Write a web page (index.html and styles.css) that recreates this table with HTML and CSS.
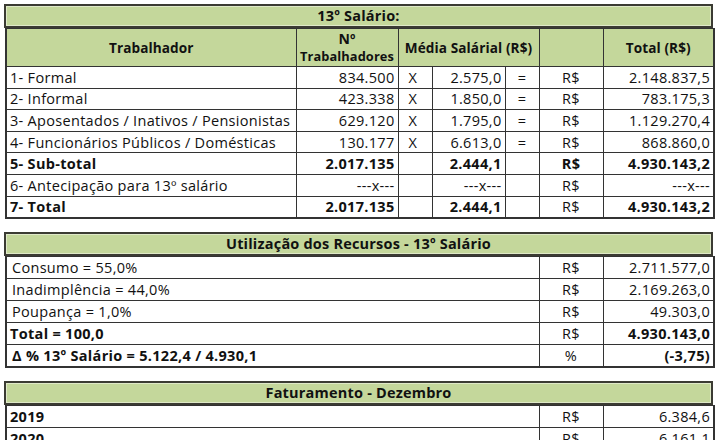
FILE: index.html
```html
<!DOCTYPE html>
<html lang="pt-BR">
<head>
<meta charset="utf-8">
<link rel="stylesheet" href="styles.css">
</head>
<body>
<div class="sheet">
  <section class="block">
    <div class="title">13º Salário:</div>
    <table class="grid t1">
      <colgroup>
        <col class="c-label"><col class="c-num"><col class="c-x"><col class="c-avg"><col class="c-eq"><col class="c-cur"><col class="c-tot">
      </colgroup>
      <tr class="head">
        <th>Trabalhador</th>
        <th><span class="big">Nº</span><br><span class="small">Trabalhadores</span></th>
        <th colspan="3">Média Salárial (R$)</th>
        <th></th>
        <th>Total (R$)</th>
      </tr>
      <tr><td class="lbl">1- Formal</td><td class="num">834.500</td><td class="x">X</td><td class="num">2.575,0</td><td class="ctr">=</td><td class="ctr">R$</td><td class="num">2.148.837,5</td></tr>
      <tr><td class="lbl">2- Informal</td><td class="num">423.338</td><td class="x">X</td><td class="num">1.850,0</td><td class="ctr">=</td><td class="ctr">R$</td><td class="num">783.175,3</td></tr>
      <tr><td class="lbl">3- Aposentados / Inativos / Pensionistas</td><td class="num">629.120</td><td class="x">X</td><td class="num">1.795,0</td><td class="ctr">=</td><td class="ctr">R$</td><td class="num">1.129.270,4</td></tr>
      <tr><td class="lbl">4- Funcionários Públicos / Domésticas</td><td class="num">130.177</td><td class="x">X</td><td class="num">6.613,0</td><td class="ctr">=</td><td class="ctr">R$</td><td class="num">868.860,0</td></tr>
      <tr class="bold"><td class="lbl">5- Sub-total</td><td class="num">2.017.135</td><td></td><td class="num">2.444,1</td><td></td><td class="ctr">R$</td><td class="num">4.930.143,2</td></tr>
      <tr><td class="lbl">6- Antecipação para 13º salário</td><td class="num">---x---</td><td></td><td class="num">---x---</td><td></td><td class="ctr">R$</td><td class="num">---x---</td></tr>
      <tr class="bold"><td class="lbl">7- Total</td><td class="num">2.017.135</td><td></td><td class="num">2.444,1</td><td></td><td class="ctr norm">R$</td><td class="num">4.930.143,2</td></tr>
    </table>
  </section>

  <section class="block">
    <div class="title">Utilização dos Recursos - 13º Salário</div>
    <table class="grid t2">
      <colgroup><col class="c-wide"><col class="c-cur"><col class="c-tot"></colgroup>
      <tr><td class="lbl ind">Consumo = 55,0%</td><td class="ctr">R$</td><td class="num">2.711.577,0</td></tr>
      <tr><td class="lbl ind">Inadimplência = 44,0%</td><td class="ctr">R$</td><td class="num">2.169.263,0</td></tr>
      <tr><td class="lbl ind">Poupança = 1,0%</td><td class="ctr">R$</td><td class="num">49.303,0</td></tr>
      <tr class="bold"><td class="lbl">Total = 100,0</td><td class="ctr norm">R$</td><td class="num">4.930.143,0</td></tr>
      <tr class="bold"><td class="lbl ind">Δ % 13º Salário = 5.122,4 / 4.930,1</td><td class="ctr norm">%</td><td class="num">(-3,75)</td></tr>
    </table>
  </section>

  <section class="block">
    <div class="title">Faturamento - Dezembro</div>
    <table class="grid t2">
      <colgroup><col class="c-wide"><col class="c-cur"><col class="c-tot"></colgroup>
      <tr><td class="lbl strong">2019</td><td class="ctr">R$</td><td class="num">6.384,6</td></tr>
      <tr><td class="lbl strong">2020</td><td class="ctr">R$</td><td class="num">6.161,1</td></tr>
    </table>
  </section>
</div>
</body>
</html>
```

FILE: styles.css
```css
html, body {
  margin: 0;
  padding: 0;
  background: #ffffff;
}

body {
  font-family: "Open Sans", "Liberation Sans", sans-serif;
  font-size: 14.5px;
  letter-spacing: 0.3px;
  color: #111111;
}

.sheet {
  width: 709px;
  padding: 4px 0 0 4px;
  display: flex;
  flex-direction: column;
  gap: 13px;
}

.title {
  height: 20px;
  line-height: 20px;
  border: 2px solid #3b3b33;
  box-shadow: inset 0 0 0 1px #dfe9c8;
  background: #c4d79b;
  font-weight: bold;
  text-align: center;
  font-size: 14.5px;
  letter-spacing: 0.2px;
}

.grid {
  width: 708px;
  margin-left: 1px;
  border-collapse: collapse;
  table-layout: fixed;
  border: 2px solid #333;
  border-top: 1px solid #333;
}

.grid td, .grid th {
  border: 1px solid #333;
  padding: 0 3px;
  height: 20.6px;
  white-space: nowrap;
  overflow: hidden;
}

.t2 td {
  height: 21px;
}

.c-label { width: 290px; }
.c-num { width: 102px; }
.c-x { width: 34px; }
.c-avg { width: 73px; }
.c-eq { width: 34px; }
.c-cur { width: 64px; }
.c-tot { width: 111px; }
.c-wide { width: 533px; }

.grid .head th {
  background: #c4d79b;
  height: 37px;
  font-size: 13.6px;
  font-weight: bold;
  line-height: 17px;
  letter-spacing: 0.1px;
  padding: 0 2px;
}

.head .big {
  font-size: 14px;
}

.head .small {
  font-size: 12.8px;
}

.grid .lbl { text-align: left; }
.grid .ind { padding-left: 5px; }
.grid .num { text-align: right; }
.grid .ctr { text-align: center; }
.grid .x { text-align: left; padding-left: 10px; }

.bold td { font-weight: bold; }
.bold td.norm { font-weight: normal; }
.strong { font-weight: bold; }
```
